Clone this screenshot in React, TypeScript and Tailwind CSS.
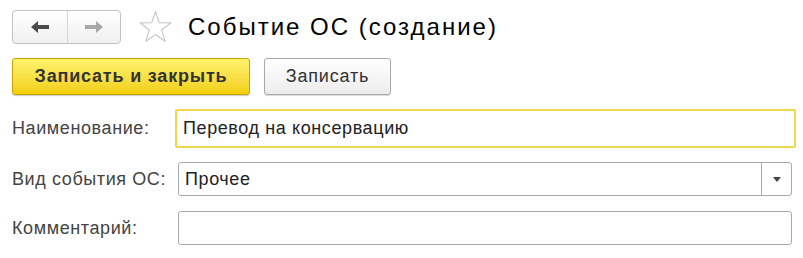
import React from "react";

export default function App() {
  return (
    <div className="w-[803px] h-[258px] bg-white font-['Liberation_Sans',Arial,sans-serif] text-[#333] overflow-hidden">
      <div className="flex items-center pl-[12px] pt-[10px]">
        <div className="flex h-[34px] w-[109px] rounded-[4px] border border-[#c2c2c2] bg-gradient-to-b from-white to-[#f0f0f0]">
          <div className="flex w-[55px] items-center justify-center border-r border-[#d4d4d4]">
            <svg width="20" height="14" viewBox="0 0 20 14">
              <path d="M1 7 L8 1 L8 5 L19 5 L19 9 L8 9 L8 13 Z" fill="#4a4a4a" />
            </svg>
          </div>
          <div className="flex flex-1 items-center justify-center">
            <svg width="20" height="14" viewBox="0 0 20 14">
              <path d="M19 7 L12 1 L12 5 L1 5 L1 9 L12 9 L12 13 Z" fill="#a8a8a8" />
            </svg>
          </div>
        </div>
        <svg className="ml-[17px]" width="35" height="34" viewBox="0 0 35 34">
          <path
            d="M17.5 1.5 L21.3 12.6 L33 12.8 L23.7 19.9 L27.1 31.2 L17.5 24.5 L7.9 31.2 L11.3 19.9 L2 12.8 L13.7 12.6 Z"
            fill="none"
            stroke="#c8c8c8"
            strokeWidth="1.2"
            strokeLinejoin="round"
          />
        </svg>
        <div className="ml-[15px] text-[24px] tracking-[2px] text-black leading-none">Событие ОС (создание)</div>
      </div>

      <div className="flex items-center pl-[12px] mt-[14px]">
        <div className="flex h-[37px] w-[238px] items-center justify-center rounded-[3px] border border-[#c4a500] bg-gradient-to-b from-[#fff26a] to-[#f2cf00] shadow-[0_1px_1px_rgba(0,0,0,0.2)] text-[18px] tracking-[0.8px] font-bold text-[#333]">
          Записать и закрыть
        </div>
        <div className="ml-[14px] flex h-[37px] w-[127px] items-center justify-center rounded-[3px] border border-[#a9a9a9] bg-gradient-to-b from-white to-[#ececec] shadow-[0_1px_1px_rgba(0,0,0,0.15)] text-[18px] tracking-[0.8px] text-[#333]">
          Записать
        </div>
      </div>

      <div className="mt-[14px] flex flex-col text-[18px] tracking-[0.6px]">
        <div className="flex items-center h-[39px]">
          <div className="w-[175px] shrink-0 pl-[12px] text-[#444]">Наименование:</div>
          <div className="flex h-[39px] w-[621px] items-center rounded-[2px] border-2 border-[#f0d74c] pl-[6px] text-[#222]">
            Перевод на консервацию
          </div>
        </div>
        <div className="flex items-center h-[34px] mt-[14px]">
          <div className="w-[178px] shrink-0 pl-[12px] text-[#444]">Вид события ОС:</div>
          <div className="flex h-[34px] w-[614px] items-center rounded-[3px] border border-[#a9a9a9] text-[#222]">
            <div className="flex-1 pl-[6px]">Прочее</div>
            <div className="flex h-full w-[30px] items-center justify-center border-l border-[#a9a9a9]">
              <svg width="8" height="5" viewBox="0 0 8 5">
                <path d="M0 0 L8 0 L4 5 Z" fill="#444" />
              </svg>
            </div>
          </div>
        </div>
        <div className="flex items-center h-[34px] mt-[15px]">
          <div className="w-[178px] shrink-0 pl-[12px] text-[#444]">Комментарий:</div>
          <div className="h-[34px] w-[614px] rounded-[3px] border border-[#a9a9a9]"></div>
        </div>
      </div>
    </div>
  );
}
